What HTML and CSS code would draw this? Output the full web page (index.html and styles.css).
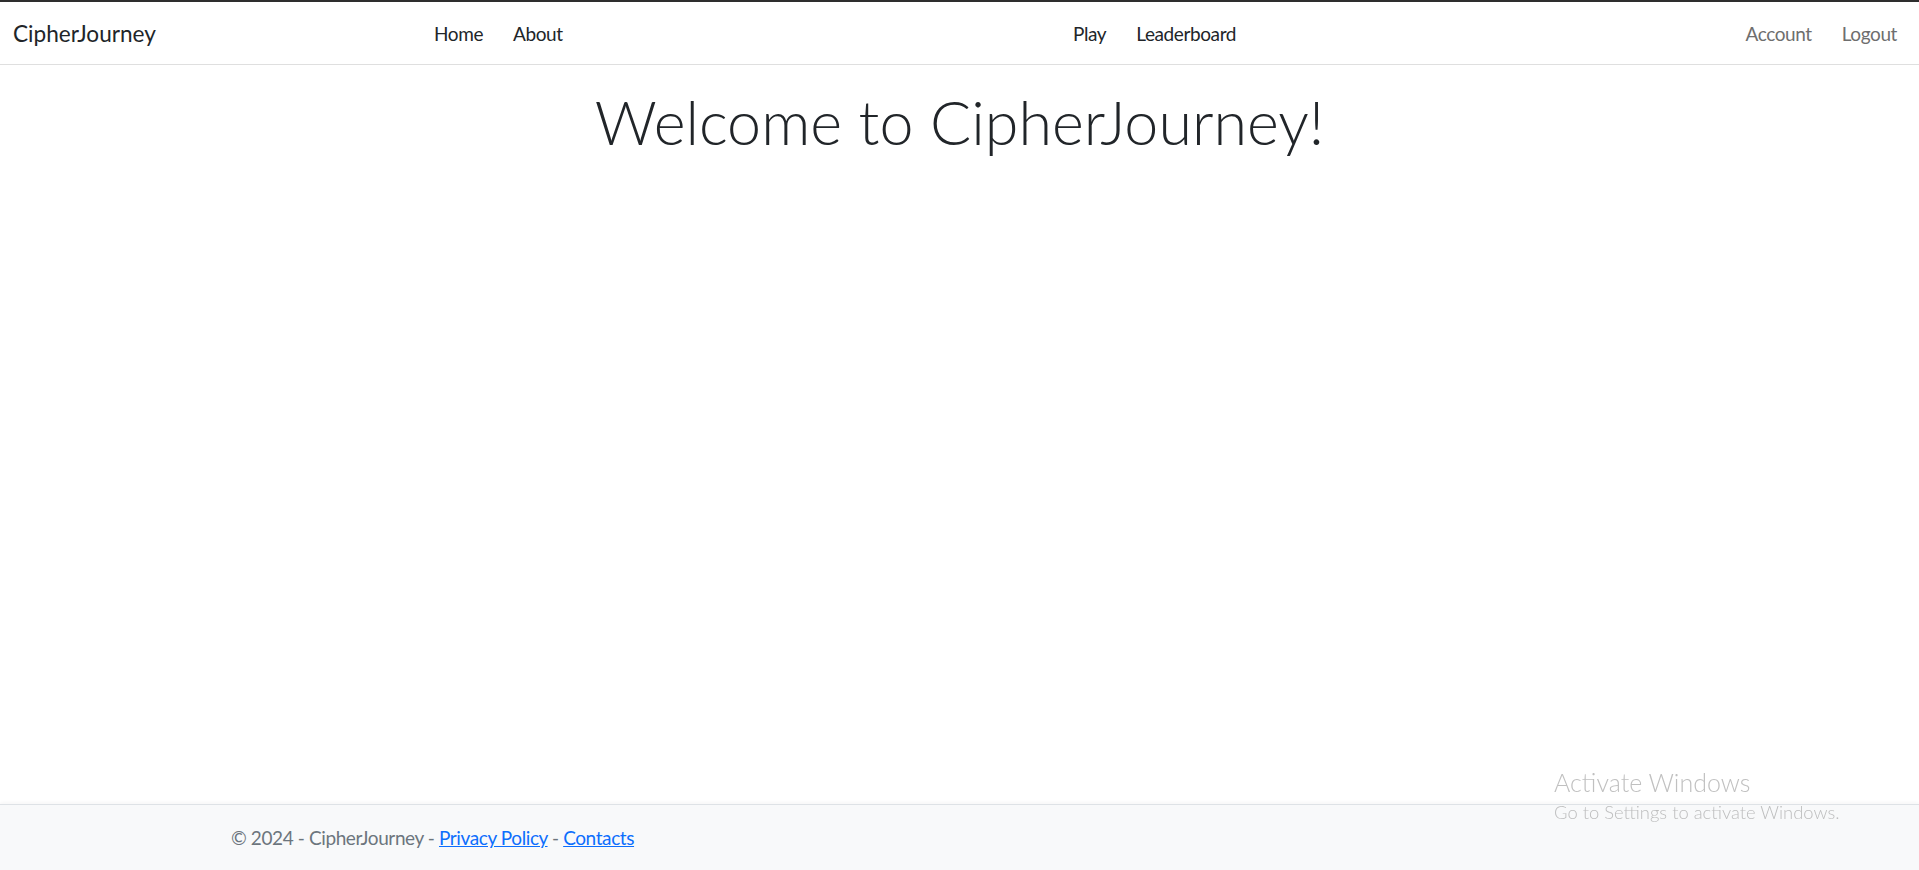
FILE: index.html
```html
<!DOCTYPE html>
<html lang="en">
<head>
<meta charset="utf-8">
<title>Home - CipherJourney</title>
<link rel="stylesheet" href="styles.css">
</head>
<body>
<header class="navbar">
  <a class="brand" href="#">CipherJourney</a>
  <ul class="nav nav-left">
    <li><a class="nav-link" href="#">Home</a></li>
    <li><a class="nav-link" href="#">About</a></li>
  </ul>
  <ul class="nav nav-center">
    <li><a class="nav-link" href="#">Play</a></li>
    <li><a class="nav-link" href="#">Leaderboard</a></li>
  </ul>
  <ul class="nav nav-right">
    <li><a class="nav-link muted" href="#">Account</a></li>
    <li><a class="nav-link muted" href="#">Logout</a></li>
  </ul>
</header>
<main class="main">
  <h1 class="display">Welcome to CipherJourney!</h1>
</main>
<footer class="footer">
  <div class="footer-inner">&copy; 2024 - CipherJourney - <a href="#">Privacy Policy</a> - <a href="#">Contacts</a></div>
</footer>
<div class="activate">
  <div class="activate-title">Activate Windows</div>
  <div class="activate-sub">Go to Settings to activate Windows.</div>
</div>
</body>
</html>
```
FILE: styles.css
```css
html, body {
  margin: 0;
  padding: 0;
  height: 100%;
}
body {
  font-family: Lato, "Liberation Sans", sans-serif;
  color: #212529;
  background: #ffffff;
  display: flex;
  flex-direction: column;
  min-height: 100vh;
}
.navbar {
  display: flex;
  align-items: center;
  height: 62px;
  border-top: 2px solid #2e2e2e;
  border-bottom: 1px solid #dfdfdf;
  padding: 0 7px 0 13px;
  box-sizing: content-box;
}
.brand {
  width: 406px;
  font-size: 22.6px;
  color: #212529;
  text-decoration: none;
}
.nav {
  display: flex;
  list-style: none;
  margin: 0;
  padding: 0;
}
.nav-left {
  width: 639px;
}
.nav-center {
  flex: 1;
}
.nav-link {
  display: block;
  padding: 8px 15px;
  font-size: 19px;
  letter-spacing: -0.4px;
  color: #212529;
  text-decoration: none;
}
.nav-link.muted {
  color: #6e6e6e;
}
.main {
  flex: 1;
  text-align: center;
}
.display {
  margin: 20px 0 0;
  font-size: 61px;
  font-weight: 300;
  line-height: 1.2;
  color: #212529;
}
.footer {
  background: #f8f9fa;
  border-top: 1px solid #dee2e6;
  height: 65px;
  box-shadow: 0 -2px 3px rgba(0,0,0,0.03);
}
.footer-inner {
  padding-left: 231px;
  line-height: 65px;
  font-size: 19px;
  letter-spacing: -0.4px;
  color: #6c757d;
  white-space: nowrap;
}
.footer-inner a {
  color: #0d6efd;
}
.activate {
  position: fixed;
  left: 1554px;
  top: 764px;
  color: rgba(140, 140, 140, 0.55);
  pointer-events: none;
}
.activate-title {
  font-size: 25px;
  font-weight: 300;
  line-height: 37px;
}
.activate-sub {
  font-size: 18.4px;
  font-weight: 300;
  line-height: 22px;
}
```
